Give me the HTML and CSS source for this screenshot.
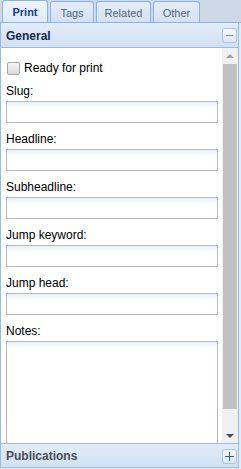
FILE: index.html
```html
<!DOCTYPE html>
<html>
<head>
<meta charset="utf-8">
<link rel="stylesheet" href="styles.css">
</head>
<body>
<div class="tabpanel">
  <div class="strip">
    <div class="tab active w-print">Print</div>
    <div class="tab w-tags">Tags</div>
    <div class="tab w-related">Related</div>
    <div class="tab w-other">Other</div>
  </div>
  <div class="acc">
    <div class="hdr hdr-open">
      <span class="hdr-title">General</span>
      <span class="tool"><span class="minus"></span></span>
    </div>
    <div class="body">
      <div class="content">
        <label class="check-row"><span class="checkbox"></span><span>Ready for print</span></label>
        <div class="field"><div class="lbl">Slug:</div><div class="input"></div></div>
        <div class="field"><div class="lbl">Headline:</div><div class="input"></div></div>
        <div class="field"><div class="lbl">Subheadline:</div><div class="input"></div></div>
        <div class="field"><div class="lbl">Jump keyword:</div><div class="input"></div></div>
        <div class="field"><div class="lbl">Jump head:</div><div class="input"></div></div>
        <div class="field"><div class="lbl">Notes:</div><div class="input textarea"></div></div>
      </div>
      <div class="sb">
        <div class="sb-btn"><span class="tri-up"></span></div>
        <div class="sb-track"><div class="sb-thumb"></div></div>
        <div class="sb-btn"><span class="tri-down"></span></div>
      </div>
    </div>
    <div class="hdr hdr-closed">
      <span class="hdr-title muted">Publications</span>
      <span class="tool"><span class="plus"></span></span>
    </div>
  </div>
</div>
</body>
</html>
```
FILE: styles.css
```css
* { box-sizing: border-box; }
html, body { margin: 0; padding: 0; }
body {
  width: 241px;
  height: 469px;
  background: #e3ebf6;
  font-family: "Liberation Sans", Arial, sans-serif;
  font-size: 12px;
  color: #000;
  overflow: hidden;
}
.tabpanel { width: 241px; }
.strip {
  height: 23px;
  background: #cdd9e8;
  border-bottom: 1px solid #8db2e3;
  display: flex;
  align-items: flex-end;
  padding-left: 2px;
  gap: 2px;
}
.tab {
  height: 21px;
  border: 1px solid #8db2e3;
  border-bottom: none;
  border-radius: 3px 3px 0 0;
  background: linear-gradient(#e4edf8, #d3e1f2);
  font-size: 11px;
  color: #4f6484;
  display: flex;
  align-items: center;
  justify-content: center;
  padding-top: 1px;
}
.tab.active {
  height: 22px;
  background: linear-gradient(#edf4fd, #deebfb);
  color: #15428b;
  font-weight: bold;
}
.w-print { width: 46px; }
.w-tags { width: 44px; }
.w-related { width: 55px; }
.w-other { width: 47px; }
.acc { width: 239px; }
.hdr {
  height: 25px;
  border: 1px solid #99bbe8;
  border-top: none;
  background: linear-gradient(#e2ecf9, #d2e0f2);
  display: flex;
  align-items: center;
  justify-content: space-between;
  padding: 1px 1px 0 5px;
}
.hdr-closed {
  border-top: 1px solid #99bbe8;
  height: 25px;
}
.hdr-title {
  font-weight: bold;
  font-size: 12px;
  color: #15294b;
}
.hdr-title.muted { color: #4a4f57; }
.tool {
  width: 15px;
  height: 15px;
  border: 1px solid #a9c3e6;
  border-radius: 3px;
  background: linear-gradient(#f7fafe, #dbe7f6);
  display: flex;
  align-items: center;
  justify-content: center;
}
.minus {
  width: 7px;
  height: 1px;
  background: #6f8fbf;
}
.plus {
  width: 9px;
  height: 9px;
  background:
    linear-gradient(#2e62a8, #2e62a8) center / 9px 1px no-repeat,
    linear-gradient(#2e62a8, #2e62a8) center / 1px 9px no-repeat;
}
.body {
  height: 395px;
  border-left: 1px solid #99bbe8;
  border-right: 1px solid #99bbe8;
  background: #fff;
  display: flex;
  overflow: hidden;
}
.content {
  flex: 1;
  padding: 10px 4px 0 5px;
  overflow: hidden;
}
.check-row {
  height: 20px;
  display: flex;
  align-items: center;
  gap: 4px;
  margin-left: 1px;
  margin-bottom: 6px;
}
.checkbox {
  width: 13px;
  height: 13px;
  border: 1px solid #a7a9ad;
  border-radius: 2px;
  background: linear-gradient(#f4f4f4, #dcdcdc);
}
.field { margin-bottom: 9px; }
.lbl {
  line-height: 15px;
  height: 15px;
  margin-bottom: 2px;
}
.input {
  height: 22px;
  border: 1px solid #b5b8c8;
  background: linear-gradient(#ebedf0, #fff 6px);
}
.textarea { height: 112px; }
.sb {
  width: 16px;
  background: #f0f0f0;
  display: flex;
  flex-direction: column;
}
.sb-btn {
  height: 15px;
  display: flex;
  align-items: center;
  justify-content: center;
}
.tri-up {
  width: 0; height: 0;
  border-left: 4px solid transparent;
  border-right: 4px solid transparent;
  border-bottom: 4px solid #a3a3a3;
}
.tri-down {
  width: 0; height: 0;
  border-left: 4px solid transparent;
  border-right: 4px solid transparent;
  border-top: 4px solid #505050;
}
.sb-track {
  flex: 1;
  padding: 1px 1px 19px 1px;
  display: flex;
}
.sb-thumb {
  flex: 1;
  background: #c1c1c1;
}
```
